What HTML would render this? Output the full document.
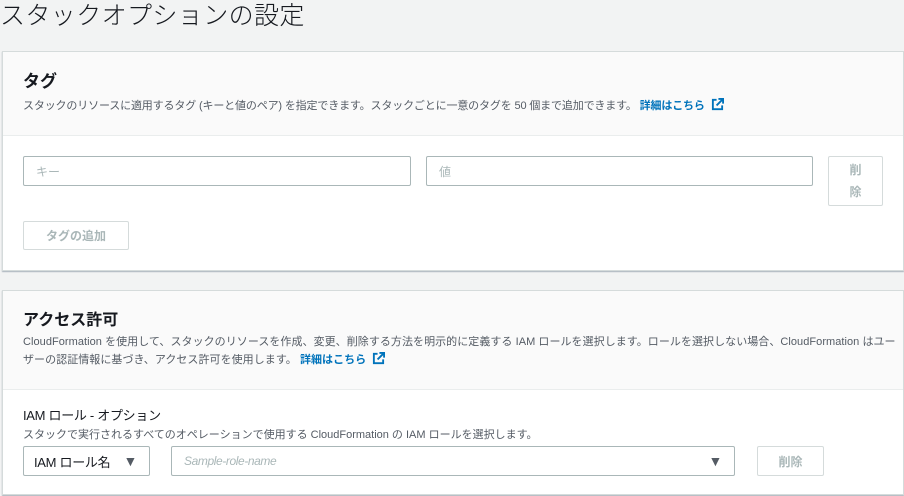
<!DOCTYPE html>
<html><head><meta charset="utf-8"><style>
*{margin:0;padding:0;box-sizing:border-box}
body{width:904px;height:496px;background:#f2f3f3;font-family:"Liberation Sans","Noto Sans CJK JP",sans-serif;color:#16191f;position:relative;overflow:hidden}
.a{position:absolute;white-space:nowrap}
.panel{position:absolute;left:2px;right:0;background:#fff;border:1px solid #d5dbdb;box-shadow:0 1px 1px rgba(0,30,60,.3)}
.hd{position:absolute;left:0;right:0;top:0;background:#fafafa;border-bottom:1px solid #eaeded}
.in{position:absolute;border:1px solid #aab7b8;border-radius:2px;background:#fff;font-size:12px;color:#aab7b8;padding-left:12px;display:flex;align-items:center}
.btn{position:absolute;border:1px solid #d5dbdb;border-radius:2px;background:#fff;color:#aab7b8;font-weight:bold;font-size:12px;display:flex;align-items:center;justify-content:center;text-align:center}
.lk{color:#0073bb;font-weight:bold}
.ic{display:inline-block;width:13px;height:13px;vertical-align:-2px;margin-left:6px}
.tri{position:absolute;right:12px;font-size:14px;color:#545b64;font-style:normal}
</style></head><body>
<div class="a" style="left:0;top:0;font-size:25px;font-weight:300;letter-spacing:0.4px;line-height:32px">スタックオプションの設定</div>

<div class="panel" style="top:51px;height:220px">
 <div class="hd" style="height:84px"></div>
 <div class="a" style="left:20px;top:15px;font-size:17px;font-weight:bold">タグ</div>
 <div class="a" style="left:20px;top:45px;font-size:11px;color:#545b64;letter-spacing:-0.15px">スタックのリソースに適用するタグ (キーと値のペア) を指定できます。スタックごとに一意のタグを 50 個まで追加できます。 <span class="lk">詳細はこちら</span><svg class="ic" viewBox="0 0 14 14"><path d="M6 2H2v10h10V8" fill="none" stroke="#0073bb" stroke-width="2"/><path d="M8 1h5v5M13 1L6 8" fill="none" stroke="#0073bb" stroke-width="2"/></svg></div>
 <div class="in" style="left:20px;top:104px;width:388px;height:30px">キー</div>
 <div class="in" style="left:423px;top:104px;width:387px;height:30px">値</div>
 <div class="btn" style="left:825px;top:104px;width:55px;height:50px;line-height:22px">削<br>除</div>
 <div class="btn" style="left:20px;top:169px;width:106px;height:29px">タグの追加</div>
</div>

<div class="panel" style="top:290px;height:205px">
 <div class="hd" style="height:99px"></div>
 <div class="a" style="left:20px;top:15px;font-size:16px;font-weight:bold">アクセス許可</div>
 <div class="a" style="left:20px;top:42px;font-size:11px;color:#545b64;letter-spacing:0.05px;line-height:18px">CloudFormation を使用して、スタックのリソースを作成、変更、削除する方法を明示的に定義する IAM ロールを選択します。ロールを選択しない場合、CloudFormation はユー<br>ザーの認証情報に基づき、アクセス許可を使用します。 <span class="lk">詳細はこちら</span><svg class="ic" viewBox="0 0 14 14"><path d="M6 2H2v10h10V8" fill="none" stroke="#0073bb" stroke-width="2"/><path d="M8 1h5v5M13 1L6 8" fill="none" stroke="#0073bb" stroke-width="2"/></svg></div>
 <div class="a" style="left:20px;top:114px;font-size:13px;letter-spacing:-0.3px">IAM ロール - オプション</div>
 <div class="a" style="left:20px;top:135px;font-size:11px;color:#545b64;letter-spacing:0px">スタックで実行されるすべてのオペレーションで使用する CloudFormation の IAM ロールを選択します。</div>
 <div class="in" style="left:20px;top:155px;width:127px;height:30px;color:#16191f;font-size:13px;padding-left:10px;letter-spacing:-0.3px">IAM ロール名<span class="tri">▼</span></div>
 <div class="in" style="left:168px;top:155px;width:564px;height:30px;font-style:italic;letter-spacing:-0.4px">Sample-role-name<span class="tri">▼</span></div>
 <div class="btn" style="left:754px;top:155px;width:67px;height:30px">削除</div>
</div>
</body></html>
